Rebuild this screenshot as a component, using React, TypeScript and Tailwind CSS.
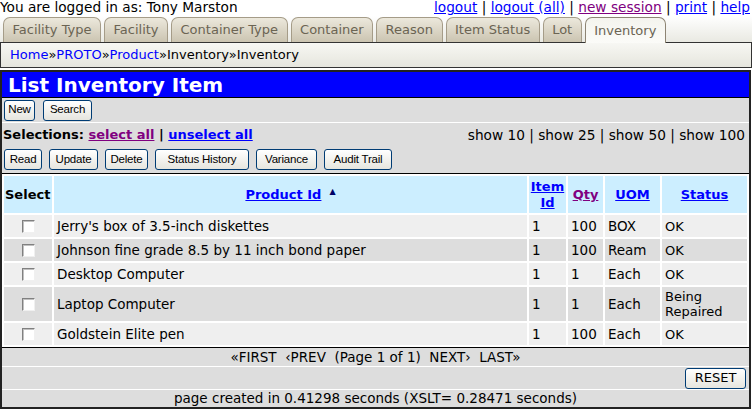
import React from 'react';

const tabs = ['Facility Type', 'Facility', 'Container Type', 'Container', 'Reason', 'Item Status', 'Lot', 'Inventory'];

const rows = [
  { name: "Jerry's box of 3.5-inch diskettes", item: '1', qty: '100', uom: 'BOX', status: 'OK' },
  { name: 'Johnson fine grade 8.5 by 11 inch bond paper', item: '1', qty: '100', uom: 'Ream', status: 'OK' },
  { name: 'Desktop Computer', item: '1', qty: '1', uom: 'Each', status: 'OK' },
  { name: 'Laptop Computer', item: '1', qty: '1', uom: 'Each', status: 'Being Repaired' },
  { name: 'Goldstein Elite pen', item: '1', qty: '100', uom: 'Each', status: 'OK' },
];

function Btn({ label, w }: { label: string; w: string }) {
  return (
    <span
      className={`${w} h-[21px] inline-flex items-center justify-center rounded-[3px] border border-[#003c74] bg-gradient-to-b from-white to-[#e6e5de] text-[11.5px] tracking-[-0.2px] font-['Liberation_Sans'] text-black`}
    >
      {label}
    </span>
  );
}

function Check() {
  return (
    <span className="block mx-auto w-[13px] h-[13px] bg-white border border-t-[#808080] border-l-[#808080] border-r-[#f0f0f0] border-b-[#f0f0f0] shadow-[inset_1px_1px_0_#c0c0c0]" />
  );
}

export default function App() {
  return (
    <div className="w-[752px] h-[410px] overflow-hidden bg-white text-[13px] text-black font-['DejaVu_Sans',sans-serif]">
      {/* logged-in line */}
      <div className="flex justify-between h-[16px] leading-[15px] pr-[2px] text-[13.7px]">
        <span>You are logged in as: Tony Marston</span>
        <span className="whitespace-pre">
          <a className="text-[#0000ff] underline">logout</a> | <a className="text-[#0000ff] underline">logout (all)</a> |{' '}
          <a className="text-[#800080] underline">new session</a> | <a className="text-[#0000ff] underline">print</a> |{' '}
          <a className="text-[#0000ff] underline">help</a>
        </span>
      </div>

      {/* tabs */}
      <div className="flex items-end h-[27px] pl-[3px] gap-[3px] border-b border-[#333] bg-gradient-to-b from-white to-[#e9e9e2]">
        {tabs.map((t) => {
          const active = t === 'Inventory';
          return (
            <span
              key={t}
              className={
                active
                  ? 'h-[26px] -mb-px px-[8.5px] flex items-center rounded-t-[7px] border border-b-0 border-[#8d8473] bg-gradient-to-b from-[#f4f4ee] to-[#fbfbf8] text-[#6b6453]'
                  : 'h-[25px] px-[8.5px] flex items-center rounded-t-[7px] border border-b-0 border-[#a59c88] bg-gradient-to-b from-[#ece8dc] to-[#cbc4b1] text-[#6b6453]'
              }
            >
              {t}
            </span>
          );
        })}
      </div>

      {/* breadcrumb */}
      <div className="h-[25px] flex items-center px-[9px] border-x border-b border-[#333] bg-gradient-to-b from-[#f7f7f3] to-[#e6e6de]">
        <a className="text-[#0000ff]">Home</a>»<a className="text-[#0000ff]">PROTO</a>»<a className="text-[#0000ff]">Product</a>»Inventory»Inventory
      </div>

      {/* main box */}
      <div className="mt-[2px] w-[751px] border-2 border-[#222] bg-[#dddddd]">
        <div className="h-[26px] bg-[#0000ff] border-b border-black flex items-center pl-[6px] text-white font-bold text-[20px]">
          List Inventory Item
        </div>
        <div className="h-[25px] border-b border-white flex items-center gap-[8px] pl-[2px]">
          <Btn label="New" w="w-[31px]" />
          <Btn label="Search" w="w-[49px]" />
        </div>
        <div className="h-[24px] flex items-center justify-between pl-[1px] pr-[4px]">
          <span className="font-bold">
            Selections: <a className="text-[#800080] underline">select all</a> | <a className="text-[#0000ff] underline">unselect all</a>
          </span>
          <span className="whitespace-pre text-[13.7px]">show 10 | show 25 | show 50 | show 100</span>
        </div>
        <div className="h-[26px] flex items-center gap-[7px] pl-[2px] pb-[1px]">
          <Btn label="Read" w="w-[38px]" />
          <Btn label="Update" w="w-[49px]" />
          <Btn label="Delete" w="w-[43px]" />
          <Btn label="Status History" w="w-[94px]" />
          <Btn label="Variance" w="w-[61px]" />
          <Btn label="Audit Trail" w="w-[68px]" />
        </div>

        <table className="w-full table-fixed border-separate border-spacing-[2px] bg-white border-y border-black text-[13.5px]">
          <colgroup>
            <col className="w-[48px]" />
            <col />
            <col className="w-[37px]" />
            <col className="w-[35px]" />
            <col className="w-[55px]" />
            <col className="w-[85px]" />
          </colgroup>
          <thead>
            <tr className="bg-[#cceeff] h-[37px] font-bold text-[13px]">
              <th className="text-left pl-[1px]">Select</th>
              <th className="text-center">
                <a className="text-[#0000ff] underline">Product Id</a>
                <span className="relative -top-[5px] ml-[8px] text-[8px] text-[#000066]">▲</span>
              </th>
              <th className="text-center leading-[16px]">
                <a className="text-[#0000ff] underline">
                  Item
                  <br />
                  Id
                </a>
              </th>
              <th className="text-center">
                <a className="text-[#800080] underline">Qty</a>
              </th>
              <th className="text-center">
                <a className="text-[#0000ff] underline">UOM</a>
              </th>
              <th className="text-center">
                <a className="text-[#0000ff] underline">Status</a>
              </th>
            </tr>
          </thead>
          <tbody>
            {rows.map((r, i) => (
              <tr key={r.name} className={i % 2 === 0 ? 'bg-[#efefef]' : 'bg-[#dddddd]'}>
                <td className={`align-middle ${r.status.length > 10 ? 'h-[34px]' : 'h-[22px]'}`}>
                  <Check />
                </td>
                <td className="px-[3px] whitespace-nowrap">{r.name}</td>
                <td className="px-[3px]">{r.item}</td>
                <td className="px-[3px]">{r.qty}</td>
                <td className="px-[3px]">{r.uom}</td>
                <td className="px-[3px] leading-[15px] text-[13px]">{r.status}</td>
              </tr>
            ))}
          </tbody>
        </table>

        <div className="h-[19px] border-b border-white flex items-center justify-center text-[13.5px] whitespace-pre">
          «FIRST  ‹PREV  (Page 1 of 1)  NEXT›  LAST»
        </div>
        <div className="h-[23px] border-b border-white flex items-center justify-end pr-[3px]">
          <span className="w-[61px] h-[21px] inline-flex items-center justify-center rounded-[3px] border border-[#003c74] bg-gradient-to-b from-white to-[#e6e5de] text-[13px]">
            RESET
          </span>
        </div>
        <div className="h-[17px] flex items-center justify-center text-[13.5px]">
          page created in 0.41298 seconds (XSLT= 0.28471 seconds)
        </div>
      </div>
    </div>
  );
}
